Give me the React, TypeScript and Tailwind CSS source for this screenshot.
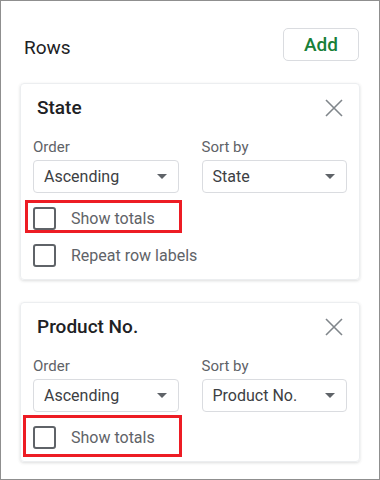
const rowCards = [
  { title: 'State', sortBy: 'State', repeat: true, box: 'left-[-8px] right-0 top-[-7px] bottom-[-3px]' },
  { title: 'Product No.', sortBy: 'Product No.', repeat: false, box: 'left-[-10px] right-0 top-[-11px] bottom-[-8px]' },
]

function CloseIcon() {
  return (
    <svg width="18" height="18" viewBox="0 0 18 18" className="text-[#80868b]">
      <path d="M1 1L17 17M17 1L1 17" stroke="currentColor" strokeWidth="1.6" fill="none" />
    </svg>
  )
}

function Dropdown({ value }: { value: string }) {
  return (
    <div className="flex items-center justify-between h-[33px] rounded-[4px] border border-[#dadce0] pl-[10px] pr-[11px]">
      <span className="text-[16px] leading-[24px] text-[#3c4043]">{value}</span>
      <svg width="10" height="5" viewBox="0 0 10 5">
        <polygon points="0,0 10,0 5,5" fill="#5f6368" />
      </svg>
    </div>
  )
}

function CheckRow({ label, highlight }: { label: string; highlight?: string }) {
  return (
    <div className="relative flex items-center gap-[15px] h-[23px] w-[149px] whitespace-nowrap">
      <span className="shrink-0 w-[23px] h-[23px] rounded-[3px] border-2 border-[#5f6368]" />
      <span className="text-[16px] leading-[23px] text-[#5f6368]">{label}</span>
      {/* red highlight drawn over the row */}
      {highlight && (
        <span className={`absolute ${highlight} border-[3px] border-[#ed1c24] pointer-events-none`} />
      )}
    </div>
  )
}

export default function App() {
  return (
    <div className="w-[380px] h-[480px] border border-[#8f8f8f] bg-white px-[19px] pt-[27px] font-['Roboto',sans-serif]">
      <div className="flex items-center justify-between h-[33px]">
        <span className="ml-[4px] mt-[6px] text-[19px] leading-[24px] text-[#202124]">Rows</span>
        <button className="mr-px w-[76px] h-[33px] rounded-[5px] border border-[#dadce0] text-[19px] leading-[24px] font-medium text-[#188038]">
          Add
        </button>
      </div>

      <div className="flex flex-col gap-[22px] mt-[22px]">
        {rowCards.map((card) => (
          <div
            key={card.title}
            className="rounded-[4px] border border-[#eceef0] shadow-[0_1px_3px_rgba(60,64,67,0.18)] px-3 pt-3 pb-3"
          >
            <div className="flex items-center justify-between h-[24px] ml-[4px] mr-[4px]">
              <span className="text-[19px] leading-[24px] font-medium text-[#202124]">{card.title}</span>
              <CloseIcon />
            </div>

            <div className="grid grid-cols-2 gap-x-[23px] mt-[17px]">
              <div>
                <div className="h-[20px] text-[15px] leading-[20px] text-[#5f6368]">Order</div>
                <div className="mt-[3px]">
                  <Dropdown value="Ascending" />
                </div>
              </div>
              <div>
                <div className="h-[20px] text-[15px] leading-[20px] text-[#5f6368]">Sort by</div>
                <div className="mt-[3px]">
                  <Dropdown value={card.sortBy} />
                </div>
              </div>
            </div>

            <div className="flex flex-col gap-[14px] mt-[14px]">
              <CheckRow label="Show totals" highlight={card.box} />
              {card.repeat && <CheckRow label="Repeat row labels" />}
            </div>
          </div>
        ))}
      </div>
    </div>
  )
}
